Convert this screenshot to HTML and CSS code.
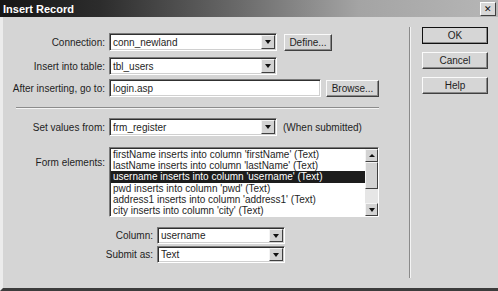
FILE: index.html
```html
<!DOCTYPE html>
<html lang="en">
<head>
  <meta charset="UTF-8" />
  <title>Insert Record</title>
  <link rel="stylesheet" href="styles.css">
</head>
<body>
  <div class="window">
    <div class="titlebar">
      <span class="title">Insert Record</span>
      <span class="close">&#x2715;</span>
    </div>

    <div class="content">
      <div class="main">
        <div class="row">
          <label class="label">Connection:</label>
          <div class="select w168"><span>conn_newland</span><i class="drop"></i></div>
          <button class="btn define">Define...</button>
        </div>
        <div class="row r2">
          <label class="label">Insert into table:</label>
          <div class="select w168"><span>tbl_users</span><i class="drop"></i></div>
        </div>
        <div class="row r3">
          <label class="label">After inserting, go to:</label>
          <div class="field w212"><span>login.asp</span></div>
          <button class="btn browse">Browse...</button>
        </div>

        <div class="sep"></div>

        <div class="row r4">
          <label class="label">Set values from:</label>
          <div class="select w168"><span>frm_register</span><i class="drop"></i></div>
          <span class="note">(When submitted)</span>
        </div>

        <div class="row r5">
          <label class="label top">Form elements:</label>
          <div class="listbox">
            <ul class="items">
              <li>firstName inserts into column 'firstName' (Text)</li>
              <li>lastName inserts into column 'lastName' (Text)</li>
              <li class="selected">username inserts into column 'username' (Text)</li>
              <li>pwd inserts into column 'pwd' (Text)</li>
              <li>address1 inserts into column 'address1' (Text)</li>
              <li>city inserts into column 'city' (Text)</li>
            </ul>
            <div class="scrollbar">
              <i class="sb-btn up"></i>
              <i class="sb-thumb"></i>
              <i class="sb-track"></i>
              <i class="sb-btn down"></i>
            </div>
          </div>
        </div>

        <div class="row sub r6">
          <label class="label wide">Column:</label>
          <div class="select w128 short"><span>username</span><i class="drop"></i></div>
        </div>
        <div class="row sub r7">
          <label class="label wide">Submit as:</label>
          <div class="select w128 short"><span>Text</span><i class="drop"></i></div>
        </div>
      </div>

      <div class="divider"></div>

      <div class="side">
        <button class="btn side-btn default">OK</button>
        <button class="btn side-btn">Cancel</button>
        <button class="btn side-btn">Help</button>
      </div>
    </div>
  </div>
</body>
</html>
```

FILE: styles.css
```css
body {
  margin: 0;
  font-family: "Liberation Sans", Arial, sans-serif;
  font-size: 10px;
  color: #1e1e1e;
  background-color: #d5d5d5;
}

.window {
  width: 498px;
  height: 291px;
  display: flex;
  flex-direction: column;
  background-color: #d5d5d5;
  overflow: hidden;
}

.titlebar {
  height: 17px;
  display: flex;
  align-items: center;
  justify-content: space-between;
  padding: 0 2px 0 3px;
  background: linear-gradient(to right, #161616 0%, #2c2c2c 20%, #6a6a6a 48%, #a4a4a4 72%, #b6b6b6 100%);
}

.title {
  color: #fff;
  font-weight: bold;
  font-size: 11px;
}

.close {
  width: 14px;
  height: 12px;
  font-size: 9px;
  line-height: 12px;
  text-align: center;
  background-color: #d8d8d8;
  border: 1px solid;
  border-color: #fff #404040 #404040 #fff;
  color: #111;
}

.content {
  flex: 1;
  display: flex;
  border-left: 3px solid #ececec;
  border-bottom: 3px solid #3c3c3c;
}

.main {
  width: 406px;
  padding-top: 16px;
}

.row {
  display: flex;
  align-items: center;
}

.r2 { margin-top: 6px; }
.r3 { margin-top: 4px; }
.r4 { margin-top: 9px; }
.r5 { margin-top: 11px; align-items: flex-start; }
.r6 { margin-top: 10px; }
.r7 { margin-top: 2px; }

.label {
  width: 102px;
  margin-right: 4px;
  text-align: right;
  white-space: nowrap;
}

.label.top {
  margin-top: 10px;
}

.label.wide {
  width: 150px;
}

.select,
.field {
  height: 18px;
  box-sizing: border-box;
  display: flex;
  align-items: center;
  background-color: #fff;
  border: 1px solid;
  border-color: #7a7a7a #fff #fff #7a7a7a;
  box-shadow: inset 1px 1px #303030, inset -1px -1px #d0d0d0;
  padding-left: 3px;
}

.select span,
.field span {
  flex: 1;
  white-space: nowrap;
}

.select.short {
  height: 17px;
}

.w168 { width: 168px; }
.w212 { width: 212px; }
.w128 { width: 128px; }

.drop {
  width: 14px;
  height: calc(100% - 2px);
  margin-right: 1px;
  box-sizing: border-box;
  background-color: #d3d3d3;
  border: 1px solid;
  border-color: #f4f4f4 #404040 #404040 #f4f4f4;
  display: flex;
  align-items: center;
  justify-content: center;
}

.drop::after {
  content: "";
  border-left: 3.5px solid transparent;
  border-right: 3.5px solid transparent;
  border-top: 4px solid #111;
}

.btn {
  font-family: inherit;
  font-size: 10px;
  color: #1e1e1e;
  background-color: #d6d6d6;
  border: 1px solid;
  border-color: #fafafa #404040 #404040 #fafafa;
  box-shadow: inset -1px -1px #8a8a8a;
  padding: 0;
  height: 17px;
}

.define {
  width: 48px;
  margin-left: 7px;
}

.browse {
  width: 53px;
  margin-left: 5px;
}

.note {
  margin-left: 6px;
}

.sep {
  margin: 10px 0 0 13px;
  width: 363px;
  height: 0;
  border-top: 1px solid #8c8c8c;
  border-bottom: 1px solid #f4f4f4;
}

.listbox {
  width: 270px;
  height: 70px;
  box-sizing: border-box;
  display: flex;
  background-color: #fff;
  border: 1px solid;
  border-color: #7a7a7a #fff #fff #7a7a7a;
  box-shadow: inset 1px 1px #303030;
  padding: 1px 0 0 1px;
}

.items {
  flex: 1;
  margin: 0;
  padding: 0;
  list-style: none;
  overflow: hidden;
  font-size: 10px;
}

.items li {
  height: 11.2px;
  line-height: 11.2px;
  padding-left: 2px;
  white-space: nowrap;
}

.items li.selected {
  background-color: #1c1c1c;
  color: #fff;
}

.scrollbar {
  width: 13px;
  display: flex;
  flex-direction: column;
  background-color: #e6e6e6;
}

.sb-btn,
.sb-thumb {
  box-sizing: border-box;
  background-color: #d3d3d3;
  border: 1px solid;
  border-color: #f4f4f4 #404040 #404040 #f4f4f4;
  display: flex;
  align-items: center;
  justify-content: center;
}

.sb-btn {
  height: 13px;
}

.sb-thumb {
  height: 27px;
}

.sb-track {
  flex: 1;
}

.sb-btn.up::after {
  content: "";
  border-left: 3px solid transparent;
  border-right: 3px solid transparent;
  border-bottom: 3px solid #111;
}

.sb-btn.down::after {
  content: "";
  border-left: 3.5px solid transparent;
  border-right: 3.5px solid transparent;
  border-top: 4px solid #111;
}

.divider {
  width: 0;
  margin: 10px 0 10px;
  border-left: 1px solid #8a8a8a;
  border-right: 1px solid #f4f4f4;
}

.side {
  padding: 10px 0 0 11px;
  display: flex;
  flex-direction: column;
  gap: 8px;
}

.side-btn {
  width: 66px;
}

.side-btn.default {
  outline: 1px solid #111;
  outline-offset: -1px;
  border-color: #fafafa #111 #111 #fafafa;
}
```
